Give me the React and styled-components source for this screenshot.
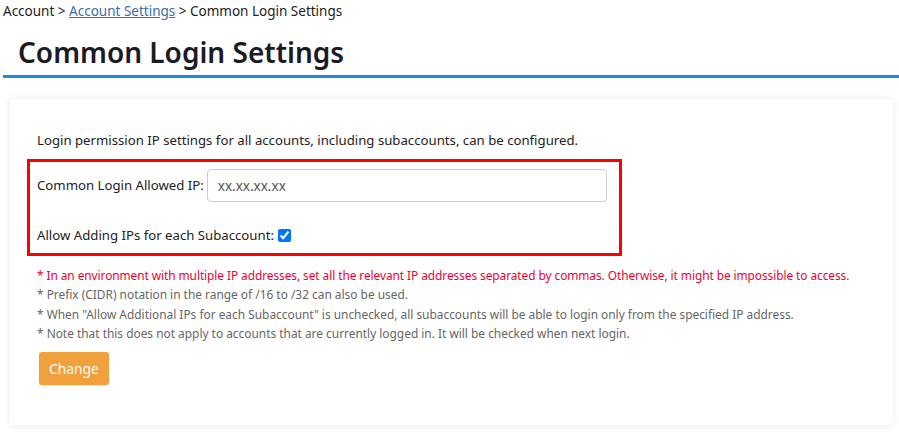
import React from "react";
import styled, { createGlobalStyle } from "styled-components";

const Global = createGlobalStyle`
  html, body { margin: 0; padding: 0; background: #fff; }
  body { font-family: "Noto Sans", "Open Sans", sans-serif; color: #212529; }
  * { box-sizing: border-box; }
`;

const Page = styled.div`
  width: 899px;
  height: 435px;
  overflow: hidden;
  background: #fff;
`;

const Breadcrumb = styled.nav`
  padding: 2px 0 0 3px;
  font-size: 13.5px;
  line-height: 19px;
  color: #222;
  a { color: #3a6ea8; text-decoration: underline; }
`;

const TitleBar = styled.div`
  margin: 13px 0 0 3px;
  border-bottom: 3px solid #1e88e5;
  padding: 0 0 5px 15px;
`;

const Title = styled.h1`
  margin: 0;
  font-size: 28px;
  line-height: 36px;
  font-weight: 600;
  color: #1b1b26;
`;

const Card = styled.section`
  margin: 21px 6px 0 10px;
  background: #fff;
  border-radius: 3px;
  box-shadow: 0 0 8px rgba(0, 0, 0, 0.08);
  padding: 30px 0 40px 17px;
`;

const Intro = styled.p`
  margin: 0 0 8px 10px;
  font-size: 13.2px;
  line-height: 22px;
  color: #222;
`;

const Highlight = styled.div`
  width: 595px;
  border: 3px solid #ff0000;
  padding: 7px 0 8px 7px;
  display: flex;
  flex-direction: column;
  gap: 24px;
`;

const Row = styled.label`
  display: flex;
  align-items: center;
  gap: 3px;
  font-size: 13.2px;
  line-height: 19px;
  color: #222;
`;

const Input = styled.input`
  width: 400px;
  height: 33px;
  border: 1px solid #ccc;
  border-radius: 4px;
  padding: 0 10px;
  font-family: inherit;
  font-size: 13.5px;
  color: #555;
`;

const Check = styled.input`
  width: 13px;
  height: 13px;
  margin: 0 0 0 1px;
  accent-color: #0075ff;
`;

const Notes = styled.ul`
  list-style: none;
  margin: 10px 0 0 10px;
  padding: 0;
  font-size: 11.9px;
  line-height: 19.3px;
  white-space: nowrap;
`;

const Note = styled.li`
  color: ${(p) => (p.$alert ? "#ee0033" : "#666")};
  letter-spacing: ${(p) => (p.$alert ? "-0.07px" : "0")};
`;

const Button = styled.button`
  display: block;
  margin: 9px 0 0 12px;
  width: 70px;
  height: 33px;
  border: none;
  border-radius: 3px;
  background: #f0a03c;
  color: #fff;
  font-family: inherit;
  font-size: 13.8px;
  box-shadow: 0 1px 2px rgba(0, 0, 0, 0.1);
`;

export default function App() {
  return (
    <Page>
      <Global />
      <Breadcrumb>
        Account &gt; <a href="#">Account Settings</a> &gt; Common Login Settings
      </Breadcrumb>
      <TitleBar>
        <Title>Common Login Settings</Title>
      </TitleBar>
      <Card>
        <Intro>Login permission IP settings for all accounts, including subaccounts, can be configured.</Intro>
        <Highlight>
          <Row>
            Common Login Allowed IP: <Input defaultValue="xx.xx.xx.xx" />
          </Row>
          <Row>
            Allow Adding IPs for each Subaccount: <Check type="checkbox" defaultChecked />
          </Row>
        </Highlight>
        <Notes>
          <Note $alert>* In an environment with multiple IP addresses, set all the relevant IP addresses separated by commas. Otherwise, it might be impossible to access.</Note>
          <Note>* Prefix (CIDR) notation in the range of /16 to /32 can also be used.</Note>
          <Note>* When "Allow Additional IPs for each Subaccount" is unchecked, all subaccounts will be able to login only from the specified IP address.</Note>
          <Note>* Note that this does not apply to accounts that are currently logged in. It will be checked when next login.</Note>
        </Notes>
        <Button>Change</Button>
      </Card>
    </Page>
  );
}
